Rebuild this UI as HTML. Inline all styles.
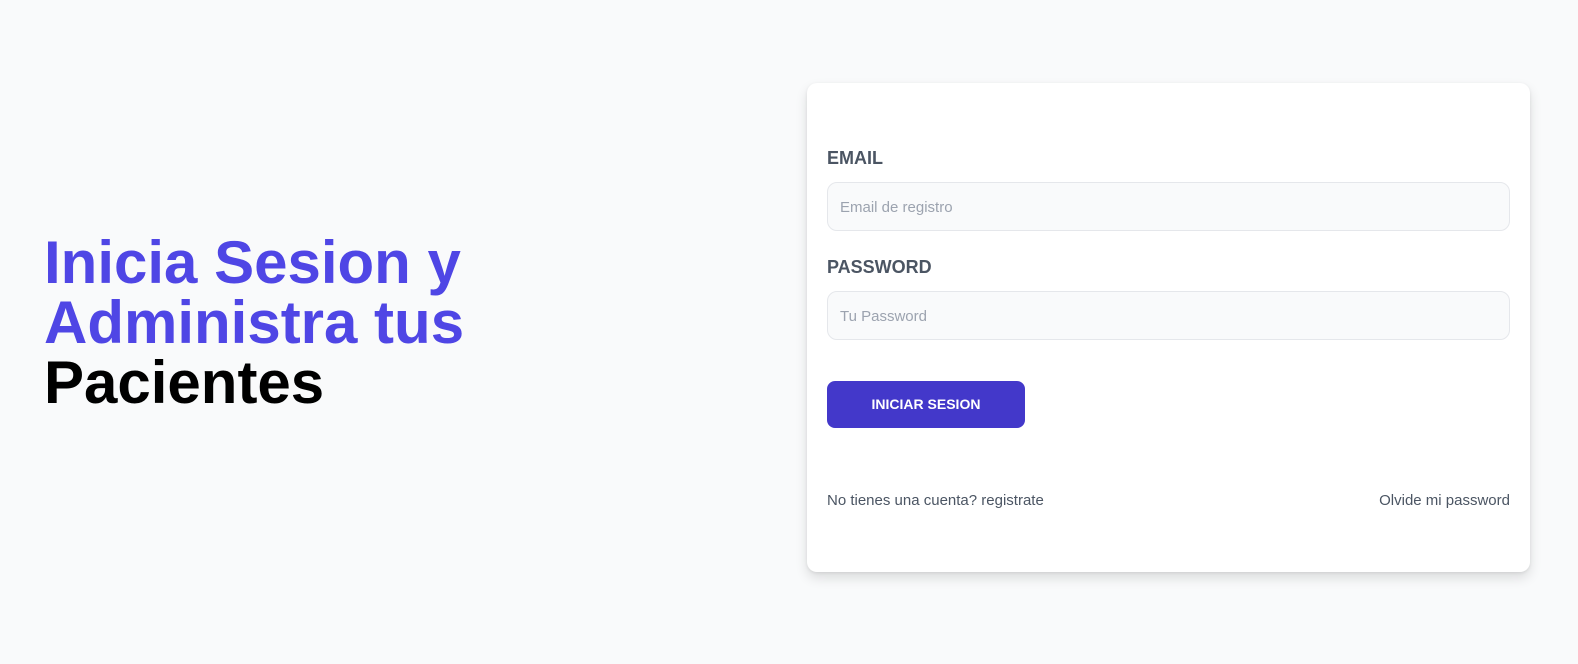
<!DOCTYPE html>
<html><head><meta charset="utf-8"><style>
*{box-sizing:border-box;margin:0;padding:0}
body{width:1578px;height:664px;background:#f9fafb;font-family:"Liberation Sans",sans-serif;position:relative;overflow:hidden}
h1{position:absolute;left:44px;top:233px;font-size:60px;line-height:60px;font-weight:900;color:#000;letter-spacing:0;white-space:nowrap}
h1 span{color:#4f46e5}
.card{position:absolute;left:807px;top:83px;width:723px;height:489px;background:#fff;border-radius:10px;box-shadow:0 6px 12px rgba(0,0,0,.12),0 1px 3px rgba(0,0,0,.08)}
label{position:absolute;left:20px;font-size:18px;font-weight:bold;color:#4b5563}
.in{position:absolute;left:20px;width:683px;height:49px;background:#f9fafb;border:1px solid #e5e7eb;border-radius:10px;font-size:15px;color:#9ca3af;padding:16px 0 0 12px}
.btn{position:absolute;left:20px;top:298px;width:198px;height:47px;background:#4338ca;border-radius:8px;color:#fff;font-weight:bold;font-size:14px;text-align:center;line-height:47px}
.l{position:absolute;top:409px;font-size:15px;color:#4b5563}
</style></head><body>
<h1><span>Inicia Sesion y<br>Administra tus</span><br>Pacientes</h1>
<div class="card">
<label style="top:65px">EMAIL</label>
<div class="in" style="top:99px">Email de registro</div>
<label style="top:174px">PASSWORD</label>
<div class="in" style="top:208px">Tu Password</div>
<div class="btn">INICIAR SESION</div>
<div class="l" style="left:20px">No tienes una cuenta? registrate</div>
<div class="l" style="right:20px">Olvide mi password</div>
</div>
</body></html>
